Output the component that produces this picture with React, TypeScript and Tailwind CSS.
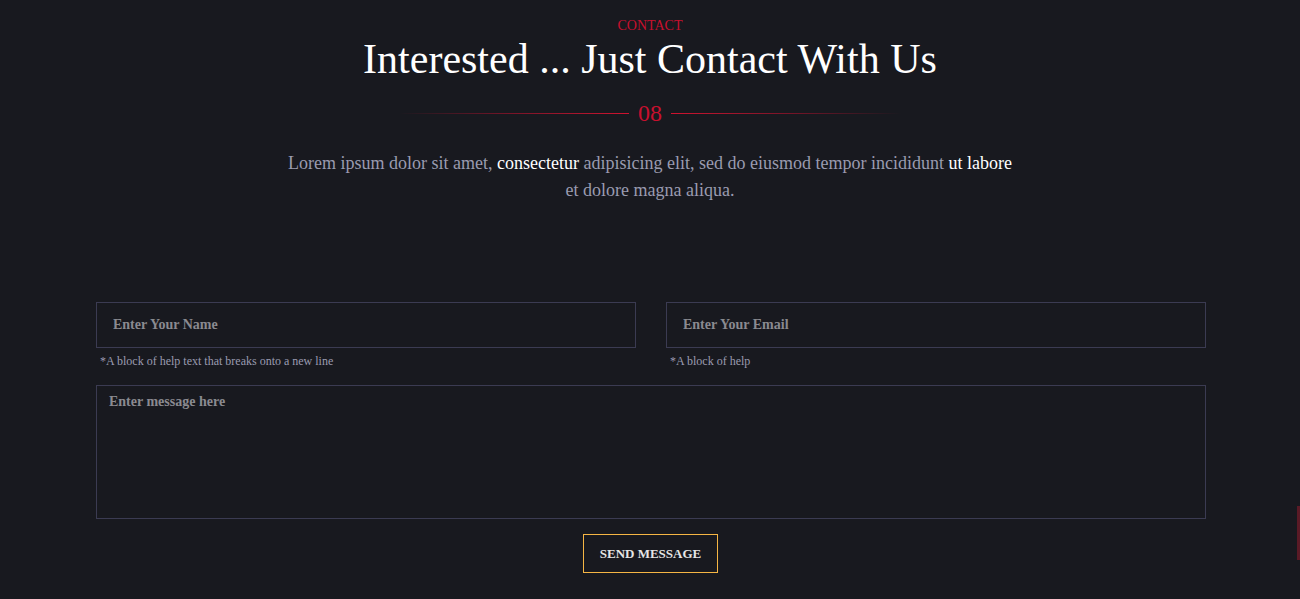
import React from 'react';

const serif = { fontFamily: '"Liberation Serif", "Times New Roman", serif' };

export default function App() {
  return (
    <div className="relative min-h-[599px] bg-[#18191f] overflow-hidden" style={serif}>
      <section className="pt-[17px] pb-[26px]">
        <div className="text-center">
          <p className="text-[14px] leading-[18px] uppercase text-[#c8102e]">Contact</p>
          <h2 className="mt-[1px] text-[42px] leading-[46px] text-white">Interested ... Just Contact With Us</h2>
          <div className="mt-[18px] flex items-center justify-center gap-[9px]">
            <span className="h-px w-[230px] bg-gradient-to-r from-transparent via-[#7a1428] to-[#d0122f]" />
            <span className="text-[24px] leading-[26px] text-[#c8102e]">08</span>
            <span className="h-px w-[230px] bg-gradient-to-l from-transparent via-[#7a1428] to-[#d0122f]" />
          </div>
          <p className="mx-auto mt-[24px] w-[735px] text-[18px] leading-[27px] text-[#9a9bb0]">
            Lorem ipsum dolor sit amet, <span className="text-white">consectetur</span> adipisicing elit, sed do eiusmod tempor incididunt <span className="text-white">ut labore</span> et dolore magna aliqua.
          </p>
        </div>

        <form className="ml-[96px] mt-[98px] w-[1110px]" onSubmit={(e) => e.preventDefault()}>
          <div className="grid grid-cols-2 gap-[30px]">
            <div>
              <input
                placeholder="Enter Your Name"
                className="h-[46px] w-full border border-[#3b3b52] bg-transparent px-[16px] text-[14px] font-bold text-white outline-none placeholder:text-[#8a8a90]"
                style={serif}
              />
              <p className="mt-[6px] pl-[4px] text-[12px] leading-[14px] text-[#9a9bb0]">*A block of help text that breaks onto a new line</p>
            </div>
            <div>
              <input
                placeholder="Enter Your Email"
                className="h-[46px] w-full border border-[#3b3b52] bg-transparent px-[16px] text-[14px] font-bold text-white outline-none placeholder:text-[#8a8a90]"
                style={serif}
              />
              <p className="mt-[6px] pl-[4px] text-[12px] leading-[14px] text-[#9a9bb0]">*A block of help</p>
            </div>
          </div>
          <textarea
            placeholder="Enter message here"
            className="mt-[17px] block h-[134px] w-full resize-none border border-[#3b3b52] bg-transparent px-[12px] py-[5px] text-[14px] font-bold text-white outline-none placeholder:text-[#8a8a90]"
            style={serif}
          />
          <div className="mt-[15px] flex justify-center pr-px">
            <button
              type="submit"
              className="h-[39px] w-[135px] border border-solid border-[#f5b544] bg-transparent text-[13px] font-bold uppercase text-[#e6e6e6]"
              style={serif}
            >
              Send Message
            </button>
          </div>
        </form>
      </section>
      <div className="absolute right-0 top-[506px] h-[54px] w-[3px] bg-[#5a1a26]" />
    </div>
  );
}
